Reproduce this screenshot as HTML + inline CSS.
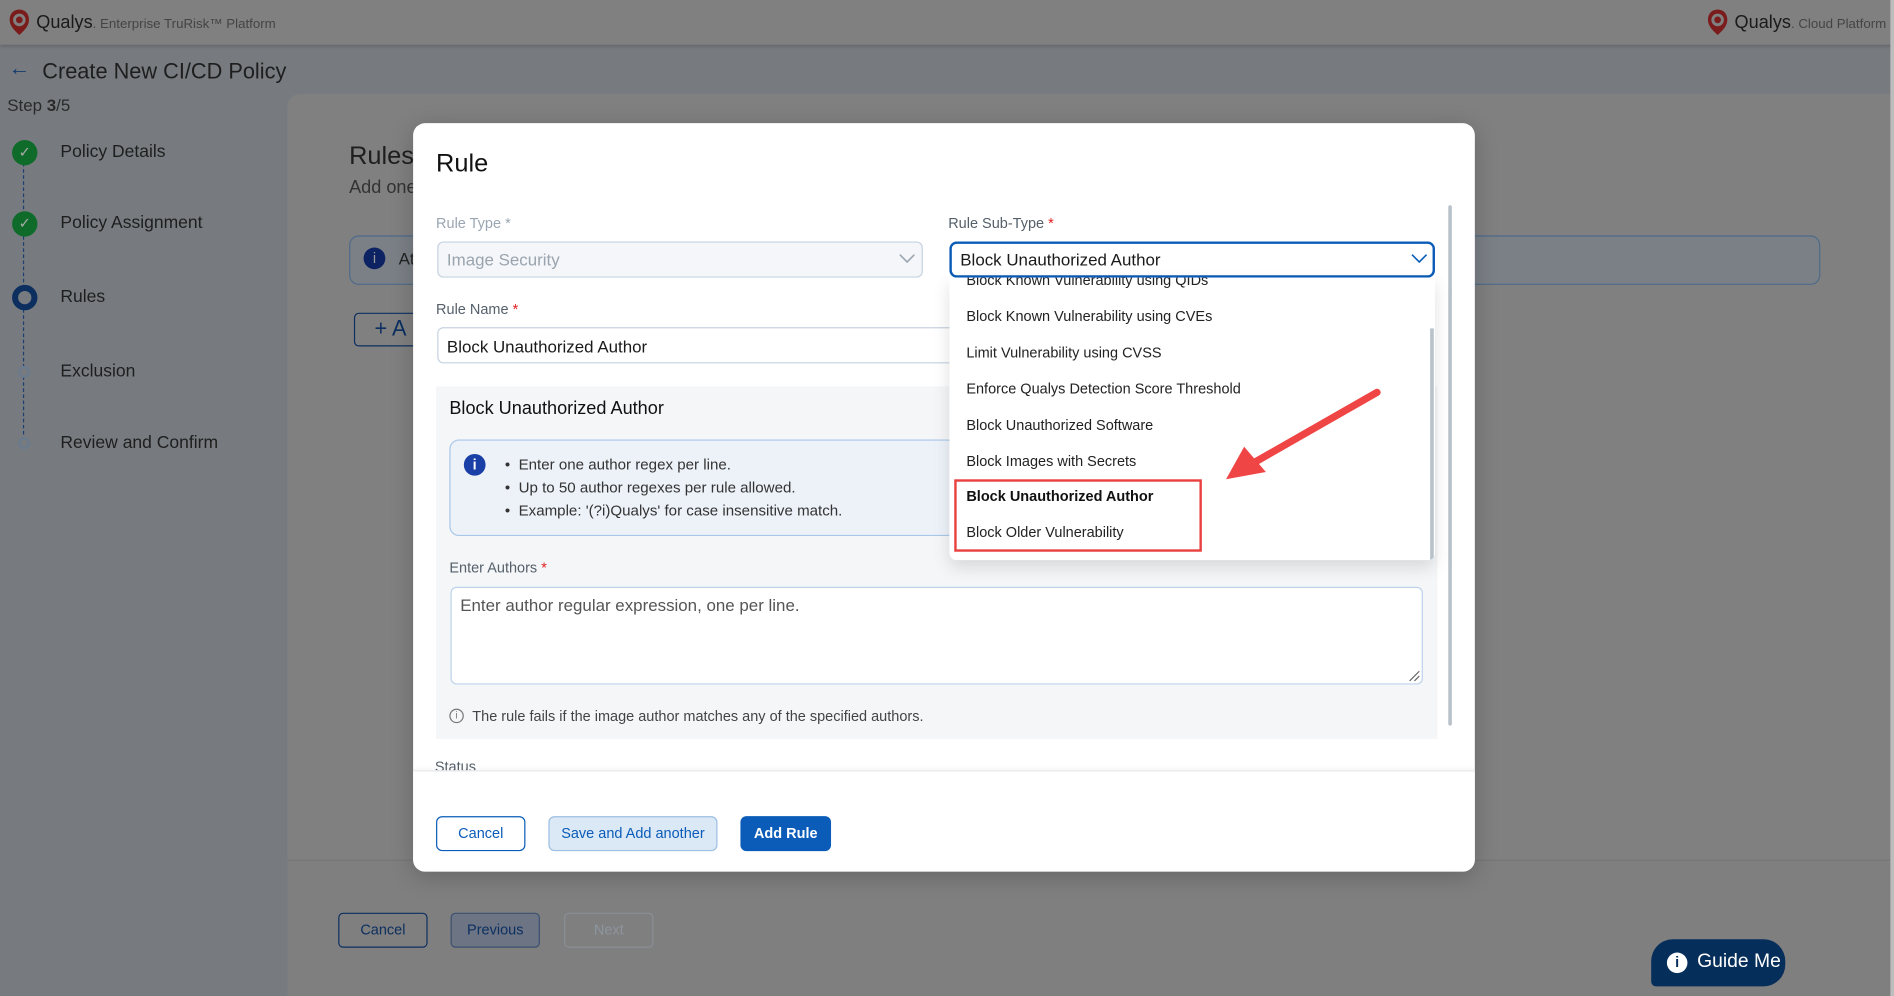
<!DOCTYPE html>
<html><head><meta charset="utf-8"><style>
*{box-sizing:border-box;margin:0;padding:0}
html,body{width:1894px;height:996px;overflow:hidden;background:#7b7f83}
#w{position:absolute;left:0;top:0;width:1568px;height:825px;transform:scale(1.2079,1.2073);transform-origin:0 0;font-family:"Liberation Sans",Arial,sans-serif;background:#777b7f;overflow:hidden}
.a{position:absolute}
.t{position:absolute;white-space:nowrap}
</style></head><body><div id="w">
<div class="a" style="left:0;top:0;width:1568px;height:37px;background:#808080;box-shadow:0 1px 3px rgba(0,0,0,.2)"></div>
<svg class="a" style="left:6px;top:7px" width="20" height="23" viewBox="0 0 20 23"><path d="M10 1C4.5 1 2 5 2 9.5c0 5 4 9 8 12.5 4-3.5 8-7.5 8-12.5C18 5 15.5 1 10 1z" fill="#7a1c1c"/><circle cx="10" cy="9.5" r="4" fill="none" stroke="#808080" stroke-width="2.4"/></svg>
<div class="t" style="left:30px;top:10px;font-size:15px;color:#1a1a1a">Qualys<span style="font-size:11px;color:#444">. Enterprise TruRisk™ Platform</span></div>
<svg class="a" style="left:1412px;top:7px" width="20" height="23" viewBox="0 0 20 23"><path d="M10 1C4.5 1 2 5 2 9.5c0 5 4 9 8 12.5 4-3.5 8-7.5 8-12.5C18 5 15.5 1 10 1z" fill="#7a1c1c"/><circle cx="10" cy="9.5" r="4" fill="none" stroke="#808080" stroke-width="2.4"/></svg>
<div class="t" style="left:1436px;top:10px;font-size:15px;color:#1a1a1a">Qualys<span style="font-size:11px;color:#444">. Cloud Platform</span></div>
<div class="t" style="left:7px;top:46px;font-size:18px;color:#143a70">←</div>
<div class="t" style="left:35px;top:49px;font-size:18px;color:#1e1e1e">Create New CI/CD Policy</div>
<div class="t" style="left:6px;top:79px;font-size:14px;color:#2a2a2a">Step <b>3</b>/5</div>
<div class="a" style="left:19px;top:130px;width:0;height:240px;border-left:1px dashed #1c3f70"></div>
<div class="a" style="left:10px;top:116px;width:21px;height:21px;border-radius:50%;background:#0f6b2a;color:#aaa;font-size:12px;text-align:center;line-height:21px">✓</div>
<div class="a" style="left:10px;top:175px;width:21px;height:21px;border-radius:50%;background:#0f6b2a;color:#aaa;font-size:12px;text-align:center;line-height:21px">✓</div>
<div class="a" style="left:10px;top:236px;width:21px;height:21px;border-radius:50%;border:5px solid #0c2f60;background:#777b7f"></div>
<div class="a" style="left:15px;top:303px;width:10px;height:10px;border-radius:50%;border:2px solid #6b7a8c;background:#777b7f"></div>
<div class="a" style="left:15px;top:362px;width:10px;height:10px;border-radius:50%;border:2px solid #6b7a8c;background:#777b7f"></div>
<div class="t" style="left:50px;top:118px;font-size:14.5px;color:#1e1e1e">Policy Details</div>
<div class="t" style="left:50px;top:177px;font-size:14.5px;color:#1e1e1e">Policy Assignment</div>
<div class="t" style="left:50px;top:238px;font-size:14.5px;color:#1e1e1e">Rules</div>
<div class="t" style="left:50px;top:300px;font-size:14.5px;color:#1e1e1e">Exclusion</div>
<div class="t" style="left:50px;top:359px;font-size:14.5px;color:#1e1e1e">Review and Confirm</div>
<div class="a" style="left:238px;top:78px;width:1330px;height:747px;background:#808080;border-radius:10px 0 0 0"></div>
<div class="a" style="left:238px;top:712px;width:1330px;height:113px;background:#7f7f7f;border-top:1px solid #777"></div>
<div class="t" style="left:289px;top:118px;font-size:21px;color:#1e1e1e">Rules</div>
<div class="t" style="left:289px;top:147px;font-size:15px;color:#333">Add one</div>
<div class="a" style="left:289px;top:195px;width:1218px;height:41px;border:1px solid #4f6a8a;border-radius:8px;background:#7b8086"></div>
<div class="a" style="left:301px;top:205px;width:18px;height:18px;border-radius:50%;background:#0d2262;color:#999;font-size:12px;text-align:center;line-height:18px">i</div>
<div class="t" style="left:330px;top:206px;font-size:14px;color:#222">At</div>
<div class="a" style="left:293px;top:259px;width:60px;height:28px;border:1px solid #0c2f60;border-radius:4px"></div>
<div class="t" style="left:310px;top:262px;font-size:18px;color:#0c2f60">+ A</div>
<div class="a" style="left:280px;top:756px;width:74px;height:29px;border:1px solid #0c2f60;border-radius:4px;font-size:12px;color:#0c2f60;text-align:center;line-height:27px">Cancel</div>
<div class="a" style="left:373px;top:756px;width:74px;height:29px;border:1px solid #3b5070;border-radius:4px;background:#6d7585;font-size:12px;color:#0c2f60;text-align:center;line-height:27px">Previous</div>
<div class="a" style="left:467px;top:756px;width:74px;height:29px;border:1px solid #8a8f95;border-radius:4px;font-size:12px;color:#8d959e;text-align:center;line-height:27px">Next</div>
<div class="a" style="left:1367px;top:778px;width:111px;height:39px;border-radius:18px 18px 18px 4px;background:#062e5a"></div>
<div class="a" style="left:1380px;top:789px;width:17px;height:17px;border-radius:50%;background:#fff;color:#062e5a;font-size:12px;font-weight:bold;text-align:center;line-height:17px">i</div>
<div class="t" style="left:1405px;top:788px;font-size:16px;color:#fff">Guide Me</div>
<div class="a" style="left:342px;top:102px;width:879px;height:620px;background:#fff;border-radius:10px;box-shadow:0 4px 20px rgba(0,0,0,.2);overflow:hidden">
 <div class="t" style="left:19px;top:22px;font-size:21px;color:#111">Rule</div>
 <div class="a" style="left:857px;top:68px;width:3px;height:431px;background:#b9c1ca;border-radius:2px"></div>
 <div class="t" style="left:19px;top:76px;font-size:12px;color:#9aa6b2">Rule Type *</div>
 <div class="a" style="left:20px;top:98px;width:402px;height:30px;border:1px solid #c6d3e0;border-radius:5px;background:#f4f6f9"></div>
 <div class="t" style="left:28px;top:105px;font-size:14px;color:#9aa4ae">Image Security</div>
 <svg class="a" style="left:402px;top:108px" width="14" height="9"><path d="M1 1l6 6 6-6" fill="none" stroke="#9aa6b2" stroke-width="1.3"/></svg>
 <div class="t" style="left:443px;top:76px;font-size:12px;color:#55606b">Rule Sub-Type <span style="color:#e02020">*</span></div>
 <div class="a" style="left:444px;top:98px;width:402px;height:30px;border:2px solid #0a5cb8;border-radius:6px"></div>
 <div class="t" style="left:453px;top:105px;font-size:14px;color:#1a1a1a">Block Unauthorized Author</div>
 <svg class="a" style="left:826px;top:108px" width="14" height="9"><path d="M1 1l6 6 6-6" fill="none" stroke="#0a5cb8" stroke-width="1.3"/></svg>
 <div class="t" style="left:19px;top:147px;font-size:12px;color:#55606b">Rule Name <span style="color:#e02020">*</span></div>
 <div class="a" style="left:20px;top:169px;width:440px;height:30px;border:1px solid #c6d3e0;border-radius:5px"></div>
 <div class="t" style="left:28px;top:177px;font-size:14px;color:#1a1a1a">Block Unauthorized Author</div>
 <div class="a" style="left:19px;top:218px;width:829px;height:292px;background:#f5f6f8"></div>
 <div class="t" style="left:30px;top:228px;font-size:15px;color:#111">Block Unauthorized Author</div>
 <div class="a" style="left:30px;top:262px;width:420px;height:80px;border:1px solid #a9c7e8;border-radius:8px;background:#edf2f9"></div>
 <div class="a" style="left:42px;top:274px;width:18px;height:18px;border-radius:50%;background:#1a3fa6;color:#fff;font-size:12px;font-weight:bold;text-align:center;line-height:18px">i</div>
 <div class="t" style="left:76px;top:274px;font-size:12.5px;color:#333;line-height:19px">• &nbsp;Enter one author regex per line.<br>• &nbsp;Up to 50 author regexes per rule allowed.<br>• &nbsp;Example: '(?i)Qualys' for case insensitive match.</div>
 <div class="t" style="left:30px;top:361px;font-size:12px;color:#55606b">Enter Authors <span style="color:#e02020">*</span></div>
 <div class="a" style="left:31px;top:384px;width:805px;height:81px;border:1px solid #bcd3ea;border-radius:5px;background:#fff"></div>
 <div class="t" style="left:39px;top:391px;font-size:14px;color:#555">Enter author regular expression, one per line.</div>
 <svg class="a" style="left:824px;top:453px" width="10" height="10"><path d="M9 1L1 9M9 5L5 9" stroke="#666"/></svg>
 <div class="a" style="left:30px;top:485px;width:12px;height:12px;border-radius:50%;border:1px solid #777;font-size:8px;color:#777;text-align:center;line-height:10px">i</div>
 <div class="t" style="left:49px;top:484px;font-size:12px;color:#444">The rule fails if the image author matches any of the specified authors.</div>
 <div class="t" style="left:18px;top:526px;font-size:12px;color:#55606b">Status</div>
 <div class="a" style="left:0;top:536px;width:879px;height:84px;background:#fff;border-top:1px solid #e6e8eb;box-shadow:0 -2px 3px rgba(0,0,0,.04)"></div>
 <div class="a" style="left:19px;top:574px;width:74px;height:29px;border:1px solid #0a5cb8;border-radius:5px;font-size:12px;color:#0a5cb8;text-align:center;line-height:27px">Cancel</div>
 <div class="a" style="left:112px;top:574px;width:140px;height:29px;border:1px solid #9dbfe3;border-radius:5px;background:#dbe8f6;font-size:12px;color:#0a5cb8;text-align:center;line-height:27px">Save and Add another</div>
 <div class="a" style="left:271px;top:574px;width:75px;height:29px;border-radius:5px;background:#0a5cb8;font-size:12px;color:#fff;font-weight:bold;text-align:center;line-height:29px">Add Rule</div>
</div>
<div class="a" style="left:786px;top:230px;width:402px;height:234px;background:#fff;border-radius:0 0 6px 6px;box-shadow:0 6px 14px rgba(0,0,0,.12);overflow:hidden">
 <div class="a" style="left:398px;top:42px;width:3px;height:192px;background:#b9c1ca"></div>
 <div class="t" style="left:14px;top:-5px;font-size:12px;color:#222">Block Known Vulnerability using QIDs</div>
 <div class="t" style="left:14px;top:25px;font-size:12px;color:#222">Block Known Vulnerability using CVEs</div>
 <div class="t" style="left:14px;top:55px;font-size:12px;color:#222">Limit Vulnerability using CVSS</div>
 <div class="t" style="left:14px;top:85px;font-size:12px;color:#222">Enforce Qualys Detection Score Threshold</div>
 <div class="t" style="left:14px;top:115px;font-size:12px;color:#222">Block Unauthorized Software</div>
 <div class="t" style="left:14px;top:145px;font-size:12px;color:#222">Block Images with Secrets</div>
 <div class="t" style="left:14px;top:174px;font-size:12px;color:#111;font-weight:bold">Block Unauthorized Author</div>
 <div class="t" style="left:14px;top:204px;font-size:12px;color:#222">Block Older Vulnerability</div>
</div>
<div class="a" style="left:790px;top:397px;width:205px;height:60px;border:2px solid #e8413f"></div>
<svg class="a" style="left:1000px;top:315px" width="150" height="90"><path d="M140 10L35 70" stroke="#f04545" stroke-width="6" stroke-linecap="round"/><path d="M15 82L30 55L48 76Z" fill="#f04545"/></svg>
<div class="a" style="left:1565px;top:0;width:3px;height:825px;background:#bdbdbd"></div>
</div></body></html>
